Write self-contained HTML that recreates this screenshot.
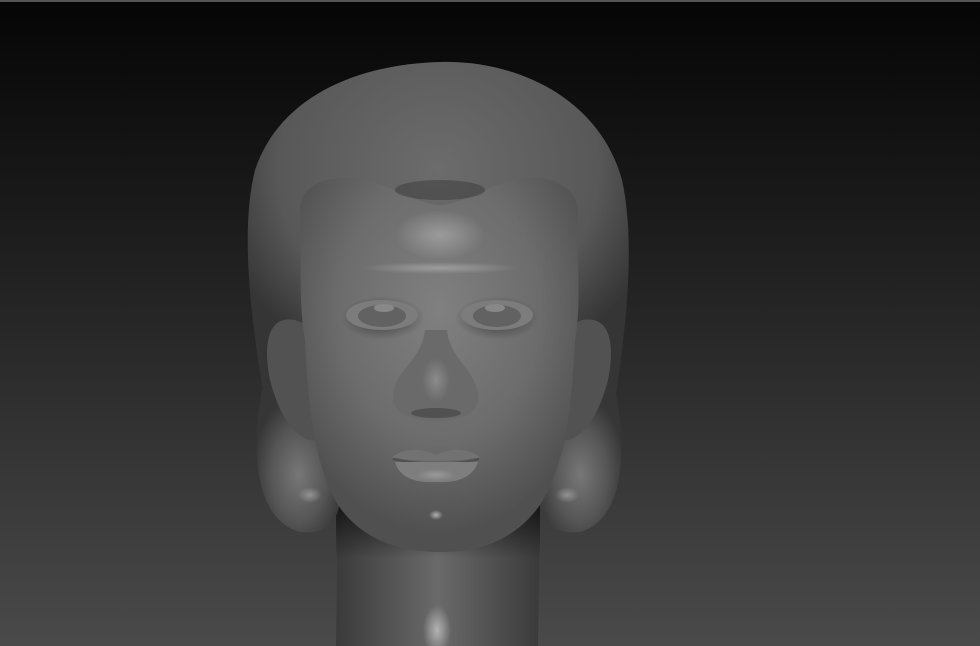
<!DOCTYPE html>
<html><head><meta charset="utf-8"><style>
html,body{margin:0;padding:0;width:980px;height:646px;overflow:hidden;background:#222}
svg{display:block}
</style></head><body>
<svg width="980" height="646" viewBox="0 0 980 646" xmlns="http://www.w3.org/2000/svg">
<defs>
<linearGradient id="bg" x1="0" y1="0" x2="0" y2="1">
<stop offset="0" stop-color="#050505"/><stop offset="0.35" stop-color="#1c1c1c"/><stop offset="1" stop-color="#4a4a4a"/>
</linearGradient>
<radialGradient id="hair" cx="0.5" cy="0.3" r="0.6">
<stop offset="0" stop-color="#6c6c6c"/><stop offset="0.7" stop-color="#585858"/><stop offset="1" stop-color="#353535"/>
</radialGradient>
<radialGradient id="face" cx="0.5" cy="0.35" r="0.6">
<stop offset="0" stop-color="#808080"/><stop offset="0.6" stop-color="#6c6c6c"/><stop offset="1" stop-color="#505050"/>
</radialGradient>
<linearGradient id="neck" x1="0" y1="0" x2="1" y2="0">
<stop offset="0" stop-color="#3a3a3a"/><stop offset="0.5" stop-color="#6a6a6a"/><stop offset="1" stop-color="#3a3a3a"/>
</linearGradient>
<linearGradient id="neckshade" x1="0" y1="0" x2="0" y2="1">
<stop offset="0" stop-color="#000" stop-opacity="0.7"/><stop offset="0.4" stop-color="#000" stop-opacity="0"/>
</linearGradient>
<radialGradient id="lobe" cx="0.5" cy="0.6" r="0.55">
<stop offset="0" stop-color="#777"/><stop offset="0.6" stop-color="#555"/><stop offset="1" stop-color="#363636"/>
</radialGradient>
<radialGradient id="hl" cx="0.5" cy="0.5" r="0.5">
<stop offset="0" stop-color="#bbb" stop-opacity="0.9"/><stop offset="1" stop-color="#bbb" stop-opacity="0"/>
</radialGradient>
<radialGradient id="sh" cx="0.5" cy="0.5" r="0.5">
<stop offset="0" stop-color="#000" stop-opacity="0.5"/><stop offset="1" stop-color="#000" stop-opacity="0"/>
</radialGradient>
</defs>
<rect width="980" height="646" fill="url(#bg)"/>
<rect width="980" height="2" fill="#555"/>
<!-- neck -->
<path d="M338 500 L540 500 L538 646 L336 646 Z" fill="url(#neck)"/>
<rect x="336" y="500" width="204" height="146" fill="url(#neckshade)"/>
<ellipse cx="437" cy="630" rx="14" ry="25" fill="url(#hl)"/>
<!-- hair -->
<path d="M440 62 C520 60 600 100 622 180 C635 240 628 320 612 420 L268 420 C250 320 240 230 255 170 C280 95 360 64 440 62 Z" fill="url(#hair)"/>
<!-- lobes -->
<path d="M262 390 C250 450 255 520 300 532 C330 535 345 520 340 470 C335 420 300 380 262 390 Z" fill="url(#lobe)"/>
<path d="M615 390 C628 450 624 520 580 532 C550 535 535 520 540 470 C545 420 580 380 615 390 Z" fill="url(#lobe)"/>
<!-- ears -->
<path d="M295 320 C270 315 262 340 270 380 C280 420 300 445 320 440 L320 330 Z" fill="#525252"/>
<path d="M582 320 C608 315 616 340 608 380 C598 420 578 445 558 440 L558 330 Z" fill="#525252"/>
<!-- face -->
<path d="M300 215 C298 190 318 178 345 178 C385 178 415 205 440 205 C465 205 495 178 535 178 C562 178 580 195 578 215 C576 260 582 300 575 340 C572 400 568 460 540 505 C515 540 480 552 440 552 C400 552 362 540 338 505 C312 460 308 400 305 340 C298 300 302 260 300 215 Z" fill="url(#face)"/>
<ellipse cx="440" cy="190" rx="45" ry="10" fill="#3a3a3a" opacity="0.5"/>
<ellipse cx="440" cy="235" rx="45" ry="25" fill="url(#hl)" opacity="0.6"/>
<ellipse cx="440" cy="268" rx="80" ry="6" fill="url(#hl)" opacity="0.6"/>
<!-- eyes -->
<ellipse cx="383" cy="318" rx="42" ry="22" fill="url(#sh)"/>
<ellipse cx="497" cy="318" rx="42" ry="22" fill="url(#sh)"/>
<ellipse cx="382" cy="315" rx="36" ry="15" fill="#7c7c7c"/>
<ellipse cx="497" cy="315" rx="36" ry="15" fill="#7c7c7c"/>
<ellipse cx="382" cy="316" rx="24" ry="11" fill="#626262"/>
<ellipse cx="497" cy="316" rx="24" ry="11" fill="#626262"/>
<ellipse cx="384" cy="308" rx="10" ry="4" fill="#888"/>
<ellipse cx="495" cy="308" rx="10" ry="4" fill="#888"/>
<!-- nose -->
<ellipse cx="436" cy="395" rx="45" ry="30" fill="url(#sh)" opacity="0.4"/>
<path d="M425 330 C422 360 395 370 393 395 C392 415 410 420 436 418 C462 420 480 415 478 395 C476 370 450 360 447 330 Z" fill="#6a6a6a"/>
<ellipse cx="436" cy="380" rx="14" ry="22" fill="url(#hl)" opacity="0.45"/>
<ellipse cx="436" cy="413" rx="25" ry="5" fill="#474747" opacity="0.7"/>
<!-- mouth -->
<path d="M392 457 C410 445 425 450 436 455 C447 450 462 445 480 457 C460 462 410 462 392 457 Z" fill="#727272"/>
<path d="M393 459 C420 465 455 465 479 459" stroke="#4e4e4e" stroke-width="2" fill="none"/>
<path d="M395 462 C400 480 420 483 436 482 C452 483 472 480 478 462 Z" fill="#7e7e7e"/>
<ellipse cx="436" cy="475" rx="20" ry="6" fill="url(#hl)" opacity="0.5"/>
<ellipse cx="436" cy="515" rx="7" ry="5" fill="url(#hl)"/>
<ellipse cx="310" cy="495" rx="12" ry="8" fill="url(#hl)" opacity="0.6"/>
<ellipse cx="567" cy="495" rx="12" ry="8" fill="url(#hl)" opacity="0.6"/>
</svg>
</body></html>
